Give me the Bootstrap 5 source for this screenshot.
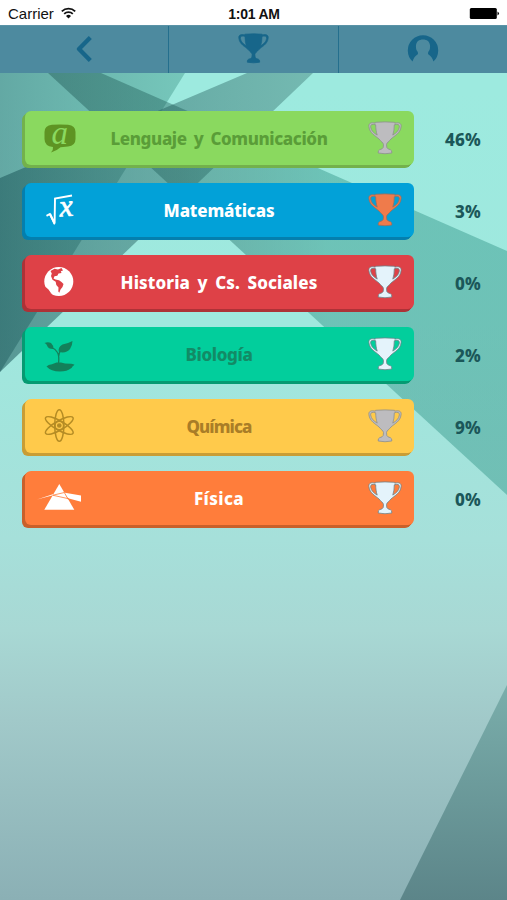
<!DOCTYPE html>
<html lang="es">
<head>
<meta charset="utf-8">
<meta name="viewport" content="width=device-width, initial-scale=1">
<title>Progreso</title>
<link href="https://cdn.jsdelivr.net/npm/bootstrap@5.3.0/dist/css/bootstrap.min.css" rel="stylesheet">
<style>
  body { font-family: "Noto Sans", "Open Sans", sans-serif; background: #9de9de; }
  .screen { width: 507px; height: 900px; z-index: 0; }
  .scene { left: 0; top: 0; z-index: -1; }
  .status { height: 25px; font-family: "Liberation Sans", Arial, sans-serif; font-size: 15px; line-height: 27px; color: #111; padding: 1px 7px 0 8px; }
  .wifi { margin-left: -1px; }
  .clock { font-size: 14px; font-weight: 700; letter-spacing: -.25px; }
  .topnav { height: 48px; background: #4d8a9f; color: #17668a; border-top: 1px solid #5a93a7; }
  .topnav > a { color: inherit; padding-bottom: 2px; }
  .topnav > a + a { border-left: 1.5px solid #246f8d; }
  .subjects { padding: 38px 26px 0 25px; gap: 18px; }
  .subject { width: 389px; height: 54px; border-radius: 6px; background: var(--face); color: var(--ink);
    box-shadow: -1px 1px var(--edge), -2px 2px var(--edge), -3px 3px var(--edge); padding: 0 12px 0 12px; text-decoration: none; }
  .title { font-weight: 800; font-size: 17px; letter-spacing: var(--track); word-spacing: 3px; line-height: 52px; padding-top: 2px; margin-left: -13px; }
  .pict { color: var(--icon, var(--ink)); }
  .pct { font-weight: 800; font-size: 17px; color: #1b5759; letter-spacing: .2px; padding-top: 3px; }
  .lang { --face: #8ad95f; --edge: #73b14c; --ink: #5a9d38; --icon: #5e9423; --track: -.38px; }
  .math { --face: #02a1d8; --edge: #047fae; --ink: #fff; --track: -.15px; }
  .hist { --face: #de4147; --edge: #ad3237; --ink: #fff; --track: .1px; }
  .biol { --face: #02ce9c; --edge: #069a72; --ink: #128b66; --icon: #13805a; --track: -.35px; }
  .chem { --face: #ffca4b; --edge: #c99d35; --ink: #a97d27; --icon: #b58c24; --track: -.9px; }
  .phys { --face: #ff7d3b; --edge: #c9602a; --ink: #fff; --track: .4px; }
  .silver { fill: #bdbcbf; stroke: #8d8f8e; }
  .bronze { fill: #ef7b4b; stroke: #9c6d5c; }
  .blank { fill: #e4f3fb; stroke: #6d8288; }
</style>
<script src="https://cdn.jsdelivr.net/npm/bootstrap@5.3.0/dist/js/bootstrap.bundle.min.js"></script>
</head>
<body>
<svg width="0" height="0" class="position-absolute" aria-hidden="true">
  <symbol id="cup" viewBox="-.5 -.5 34 34">
    <path fill-rule="evenodd" stroke-width=".8" d="M7 .8Q16.500 0 26 .8L26.300 1.700C30 .6 33 1.500 32.600 5C32 12 25.500 14.500 22.500 17.500C20.500 20 18.300 21 18 23L18.300 26Q18.800 27.500 22 28.300Q23.500 28.800 23.300 31.500Q16.500 33 9.700 31.500Q9.500 28.800 11 28.300Q14.200 27.500 14.700 26L15 23C14.700 21 12.500 20 10.500 17.500C7.500 14.500 1 12 .4 5C0 1.500 3 .6 6.700 1.700ZM7.200 3.300C4 2.300 2 2.900 2.100 5.300C2.600 9.500 5.500 11.500 8.700 13.600C7.700 10.500 7.200 7 7.200 3.300ZM25.800 3.300C25.800 7 25.300 10.500 24.300 13.600C27.500 11.500 30.400 9.500 30.900 5.300C31 2.900 29 2.300 25.800 3.300Z"/>
  </symbol>
</svg>
<main class="screen position-relative overflow-hidden d-flex flex-column">
  <svg class="scene position-absolute" width="507" height="900" aria-hidden="true">
    <defs>
      <linearGradient id="sky" x1="0" y1="0" x2="0" y2="1">
        <stop offset=".1" stop-color="#9deadf"/><stop offset=".36" stop-color="#9fe8de"/><stop offset=".6" stop-color="#a6e0da"/><stop offset=".7" stop-color="#a8d8d4"/><stop offset=".8" stop-color="#a1c9c9"/><stop offset="1" stop-color="#8bb0b5"/>
      </linearGradient>
      <linearGradient id="left" gradientUnits="userSpaceOnUse" x1="0" y1="0" x2="185" y2="0">
        <stop offset="0" stop-color="#246264" stop-opacity=".48"/><stop offset="1" stop-color="#30887a" stop-opacity=".36"/>
      </linearGradient>
      <linearGradient id="beam" gradientUnits="userSpaceOnUse" x1="313" y1="0" x2="0" y2="0">
        <stop offset="0" stop-color="#3b7672" stop-opacity=".42"/><stop offset="1" stop-color="#1a5558" stop-opacity=".54"/>
      </linearGradient>
      <linearGradient id="ray" gradientUnits="userSpaceOnUse" x1="48" y1="0" x2="420" y2="0">
        <stop offset="0" stop-color="#1b5350" stop-opacity=".42"/><stop offset=".35" stop-color="#205f5a" stop-opacity=".42"/><stop offset=".75" stop-color="#349689" stop-opacity=".46"/><stop offset="1" stop-color="#349689" stop-opacity=".46"/>
      </linearGradient>
      <linearGradient id="corner" x1="0" y1="0" x2="0" y2="1">
        <stop offset="0" stop-color="#7aaeab"/><stop offset="1" stop-color="#5c8589"/>
      </linearGradient>
    </defs>
    <rect width="507" height="900" fill="url(#sky)"/>
    <path fill="url(#left)" d="M0 73H185L0 372Z"/>
    <path fill="url(#beam)" d="M247 73H313L0 372V178Z"/>
    <path fill="url(#ray)" d="M48 73H101L507 251V495Z"/>
    <path fill="url(#corner)" d="M507 685V900H400Z"/>
  </svg>

  <header class="status bg-white d-flex flex-shrink-0">
    <div class="col d-flex align-items-center gap-2">
      <span>Carrier</span>
      <svg class="wifi" width="15" height="12" viewBox="0 0 15 12" fill="none" stroke="#111" stroke-width="1.8" aria-hidden="true"><path d="M.8 4.300A9.800 9.800 0 0 1 14.200 4.300M3.200 6.900A6.300 6.300 0 0 1 11.800 6.900"/><path d="M7.500 11.500L5 8.900A3.700 3.700 0 0 1 10 8.900Z" fill="#111" stroke="none"/></svg>
    </div>
    <div class="clock">1:01 AM</div>
    <div class="col d-flex justify-content-end align-items-center">
      <svg width="31" height="13" aria-hidden="true"><rect x=".8" y="1" width="27" height="11" rx="1.500"/><path d="M28.500 4.500Q31.500 6.500 28.500 8.500Z"/></svg>
    </div>
  </header>

  <nav class="topnav row g-0 flex-shrink-0">
    <a href="#" class="col d-flex align-items-center justify-content-center" aria-label="Volver">
      <svg width="16" height="28" viewBox="0 0 16 28" fill="none" stroke="currentColor" stroke-width="4.300" stroke-linejoin="round"><path d="M14.300 2.500L3 14L14.300 25.500"/></svg>
    </a>
    <a href="#" class="col d-flex align-items-center justify-content-center" aria-label="Logros">
      <svg width="31" height="31" fill="currentColor" stroke="currentColor"><use href="#cup"/></svg>
    </a>
    <a href="#" class="col d-flex align-items-center justify-content-center" aria-label="Perfil">
      <svg width="32" height="32" viewBox="0 0 32 32" fill="currentColor"><path d="M5.500 28.500A15.200 15.200 0 1 1 26.500 28.500Q25 23.500 21.500 21.500Q20.500 20.500 21.500 18.500C22.800 17 23.200 15 23 12.500C22.700 8.500 20 6.500 16 6.500S9.300 8.500 9 12.500C8.800 15 9.200 17 10.500 18.500Q11.500 20.500 10.500 21.500Q7 23.500 5.500 28.500Z"/></svg>
    </a>
  </nav>

  <section class="subjects d-flex flex-column">
    <div class="d-flex align-items-center justify-content-between">
      <a href="#" class="subject lang d-flex align-items-center">
        <svg class="pict" width="46" height="54" fill="currentColor"><path d="M15 13.800Q23 13 31 13.800Q38.500 14.600 38.500 21V28Q38.500 34.800 31 35.600L23.500 36.200Q19.500 40 14 41.500Q16.500 38.500 16 36Q7.500 35 7.500 28V21Q7.500 14.600 15 13.800Z"/><text x="14.500" y="32.500" font-family="Liberation Serif, serif" font-style="italic" font-weight="400" font-size="33" fill="#8ad95f">a</text></svg>
        <span class="title flex-fill text-center">Lenguaje y Comunicación</span>
        <svg class="silver" width="34" height="34"><use href="#cup"/></svg>
      </a>
      <span class="pct">46%</span>
    </div>
    <div class="d-flex align-items-center justify-content-between">
      <a href="#" class="subject math d-flex align-items-center">
        <svg class="pict" width="46" height="54" fill="currentColor"><path d="M9.500 32.800L12.800 31L17.600 40.500L18 15.500L35 12.500" fill="none" stroke="currentColor" stroke-width="1.900"/><path d="M12 31L14 30.500L18 39V41.500H16.800Z"/><text x="22.500" y="33.300" font-family="Liberation Serif, serif" font-style="italic" font-weight="400" font-size="31" stroke="currentColor" stroke-width=".7" transform="rotate(-5 28 27)">x</text></svg>
        <span class="title flex-fill text-center">Matemáticas</span>
        <svg class="bronze" width="34" height="34"><use href="#cup"/></svg>
      </a>
      <span class="pct">3%</span>
    </div>
    <div class="d-flex align-items-center justify-content-between">
      <a href="#" class="subject hist d-flex align-items-center">
        <svg class="pict" width="46" height="54" fill="currentColor"><circle cx="21.800" cy="26.500" r="14.500"/><path fill="#de4147" d="M13.500 16L17.500 13.800L21 14.500L24.500 13L26 15.500L23.800 16.200L24.500 18L21.500 18.500L20.300 20.800L17.500 21.200L16.500 23.500L18.500 24.500L22 25.300L24.500 27L26.500 29L25.500 32L23.500 34.500L22.300 37.800L21.300 36.500L21.500 32.500L19.300 30L18.700 26.800L15.500 24.800L14 21L14.800 18.500ZM7.500 31L11.500 34.500L15 39.500L10 37Z"/></svg>
        <span class="title flex-fill text-center">Historia y Cs. Sociales</span>
        <svg class="blank" width="34" height="34"><use href="#cup"/></svg>
      </a>
      <span class="pct">0%</span>
    </div>
    <div class="d-flex align-items-center justify-content-between">
      <a href="#" class="subject biol d-flex align-items-center">
        <svg class="pict" width="46" height="54" fill="currentColor"><path d="M9.500 39.500Q11 37.500 15 37.300L19.500 35.500H24L28 36.500Q36 36.500 37.500 37.800Q35 39.500 34.500 41Q30 44.500 23 44.500Q14 44.500 9.500 39.500Z"/><path d="M21.500 37Q22.500 29 20.500 25.500Q19 22.500 15 20.500M21.700 29Q22 23 29 19" fill="none" stroke="currentColor" stroke-width="1.300"/><path d="M7.500 16Q11 14.300 14 16Q16.500 18 16.300 22Q11 22 10 18.500Q9.500 16.800 7.500 16Z"/><path d="M22 25Q20.500 20 25.500 17.500Q31 16.500 35.500 14Q35.500 18 33 22Q29.500 26.500 22 25Z"/></svg>
        <span class="title flex-fill text-center">Biología</span>
        <svg class="blank" width="34" height="34"><use href="#cup"/></svg>
      </a>
      <span class="pct">2%</span>
    </div>
    <div class="d-flex align-items-center justify-content-between">
      <a href="#" class="subject chem d-flex align-items-center">
        <svg class="pict" width="46" height="54" fill="none" stroke="currentColor" stroke-width="1.500"><ellipse cx="22.300" cy="26.500" rx="4.600" ry="15.800"/><ellipse cx="22.300" cy="26.500" rx="4.600" ry="15.800" transform="rotate(60 22.300 26.500)"/><ellipse cx="22.300" cy="26.500" rx="4.600" ry="15.800" transform="rotate(-60 22.300 26.500)"/><circle cx="22.300" cy="26.500" r="4.300"/><circle cx="22.300" cy="26.500" r="1.600" fill="currentColor"/></svg>
        <span class="title flex-fill text-center">Química</span>
        <svg class="silver" width="34" height="34"><use href="#cup"/></svg>
      </a>
      <span class="pct">9%</span>
    </div>
    <div class="d-flex align-items-center justify-content-between">
      <a href="#" class="subject phys d-flex align-items-center">
        <svg class="pict" width="46" height="54" fill="currentColor"><path d="M22.300 13L37.300 38.700H7.300Z"/><path d="M26.500 21.500L44 24.500V30.700L31 27.300Z"/><path d="M0 28.500L16.500 23L16 24.300Z"/><path d="M15.500 24.300L27 21.600M16 24.300L32 27.800M27 21L31.300 28.500" fill="none" stroke="#ff7d3b" stroke-width=".8"/></svg>
        <span class="title flex-fill text-center">Física</span>
        <svg class="blank" width="34" height="34"><use href="#cup"/></svg>
      </a>
      <span class="pct">0%</span>
    </div>
  </section>
</main>
</body>
</html>
